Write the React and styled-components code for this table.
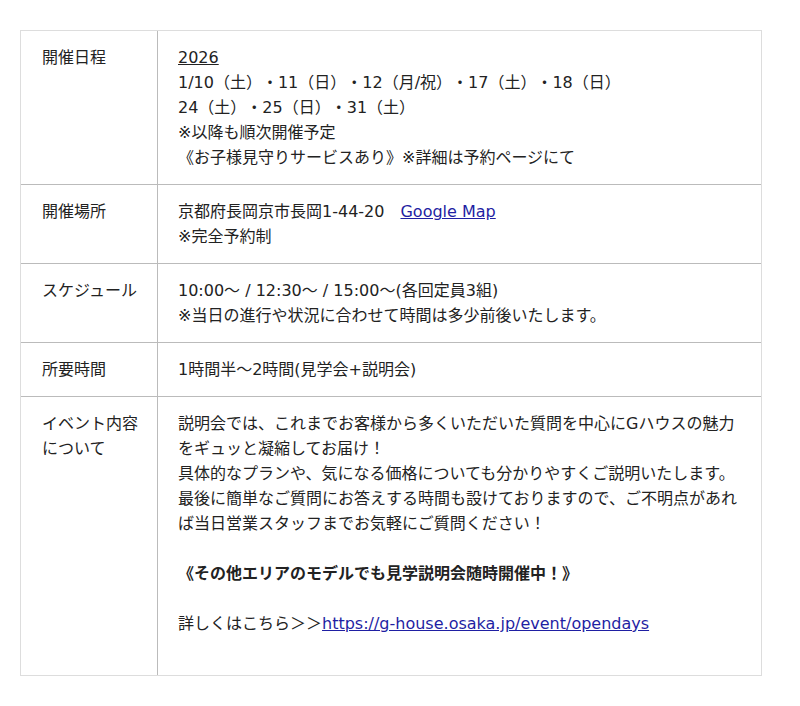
import React from "react";
import styled, { createGlobalStyle } from "styled-components";

const GlobalStyle = createGlobalStyle`
  body {
    margin: 0;
    background: #fff;
    font-family: "DejaVu Sans", "Noto Sans CJK JP", sans-serif;
    color: #222;
  }
`;

const Wrapper = styled.section`
  width: 742px;
  box-sizing: border-box;
  margin: 30px 0 0 20px;
  border: 1px solid #dddddd;
  font-size: 16px;
  line-height: 25px;
  text-spacing-trim: space-all;
  p {
    margin: 0;
  }
  strong {
    font-weight: bold;
  }
`;

const Row = styled.div`
  display: grid;
  grid-template-columns: 137px 1fr;
  & + & {
    border-top: 1px solid #bbbbbb;
  }
`;

const Label = styled.div`
  box-sizing: border-box;
  padding: 14px 16px 14px 21px;
  border-right: 1px solid #bbbbbb;
`;

const Body = styled.div`
  padding: 14px 20px;
`;

const Line = styled.div``;

const Blank = styled.div`
  height: 25px;
`;

const Link = styled.a`
  color: #1f1fa3;
  text-decoration: underline;
`;

const rows = [
  {
    label: "開催日程",
    lines: [
      <u key="y">2026</u>,
      "1/10（土）・11（日）・12（月/祝）・17（土）・18（日）",
      "24（土）・25（日）・31（土）",
      "※以降も順次開催予定",
      "《お子様見守りサービスあり》※詳細は予約ページにて",
    ],
  },
  {
    label: "開催場所",
    lines: [
      <>
        京都府長岡京市長岡1-44-20　<Link href="#">Google Map</Link>
      </>,
      "※完全予約制",
    ],
  },
  {
    label: "スケジュール",
    lines: [
      "10:00～ / 12:30～ / 15:00～(各回定員3組)",
      "※当日の進行や状況に合わせて時間は多少前後いたします。",
    ],
  },
  {
    label: "所要時間",
    lines: ["1時間半～2時間(見学会+説明会)"],
  },
];

const Event = () => {
  return (
    <Wrapper>
      <GlobalStyle />
      {rows.map((row, ind) => {
        return (
          <Row key={ind}>
            <Label>{row.label}</Label>
            <Body>
              {row.lines.map((line, i) => (
                <Line key={i}>{line}</Line>
              ))}
            </Body>
          </Row>
        );
      })}
      <Row>
        <Label>イベント内容について</Label>
        <Body>
          <p>
            説明会では、これまでお客様から多くいただいた質問を中心にGハウスの魅力をギュッと凝縮してお届け！
            <br />
            具体的なプランや、気になる価格についても分かりやすくご説明いたします。
            <br />
            最後に簡単なご質問にお答えする時間も設けておりますので、ご不明点があれば当日営業スタッフまでお気軽にご質問ください！
          </p>
          <Blank />
          <p>
            <strong>《その他エリアのモデルでも見学説明会随時開催中！》</strong>
          </p>
          <Blank />
          <p>
            詳しくはこちら＞＞
            <Link href="#">https://g-house.osaka.jp/event/opendays</Link>
          </p>
          <Blank />
        </Body>
      </Row>
    </Wrapper>
  );
};

export default function App() {
  return <Event />;
}
